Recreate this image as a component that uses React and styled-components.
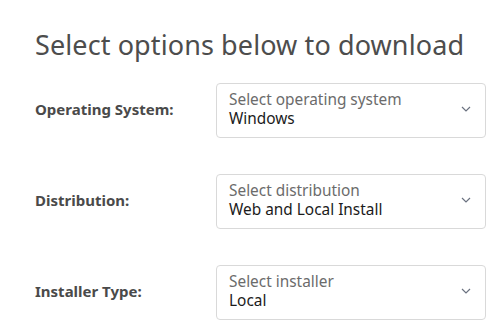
import React from "react";
import styled, { createGlobalStyle } from "styled-components";

const Global = createGlobalStyle`
  html, body { margin: 0; padding: 0; background: #fff; }
  body { font-family: "Noto Sans", "Open Sans", sans-serif; }
`;

const Page = styled.div`
  padding: 27px 8px 0 35px;
  width: 494px;
  box-sizing: border-box;
`;

const Title = styled.h2`
  margin: 0 0 20px 0;
  font-size: 27px;
  font-weight: 400;
  line-height: 36px;
  color: #4d4d4d;
  letter-spacing: 0.1px;
`;

const Form = styled.div`
  display: flex;
  flex-direction: column;
  gap: 36px;
`;

const Row = styled.div`
  display: grid;
  grid-template-columns: 181px 270px;
  align-items: center;
`;

const Label = styled.label`
  font-size: 15px;
  font-weight: 700;
  color: #4a4a4a;
  margin-top: -4px;
`;

const SelectBox = styled.div`
  height: 55px;
  box-sizing: border-box;
  border: 1px solid #d9d9d9;
  border-radius: 4px;
  display: flex;
  align-items: center;
  padding: 0 14px 3px 12px;
`;

const Texts = styled.div`
  flex: 1;
  display: flex;
  flex-direction: column;
  line-height: 19px;
  font-size: 15.4px;
`;

const Placeholder = styled.span`
  color: #6b6b6b;
`;

const Value = styled.span`
  color: #1b1b1b;
`;

const Chevron = () => (
  <svg width="10" height="6" viewBox="0 0 10 6" style={{ marginTop: 0 }}>
    <path d="M1 1 L5 5 L9 1" fill="none" stroke="#6b7280" strokeWidth="1.2" />
  </svg>
);

const rows = [
  ["Operating System:", "Select operating system", "Windows"],
  ["Distribution:", "Select distribution", "Web and Local Install"],
  ["Installer Type:", "Select installer", "Local"],
];

export default function App() {
  return (
    <>
      <Global />
      <Page>
        <Title>Select options below to download</Title>
        <Form>
          {rows.map(([label, ph, val]) => (
            <Row key={label}>
              <Label>{label}</Label>
              <SelectBox>
                <Texts>
                  <Placeholder>{ph}</Placeholder>
                  <Value>{val}</Value>
                </Texts>
                <Chevron />
              </SelectBox>
            </Row>
          ))}
        </Form>
      </Page>
    </>
  );
}
